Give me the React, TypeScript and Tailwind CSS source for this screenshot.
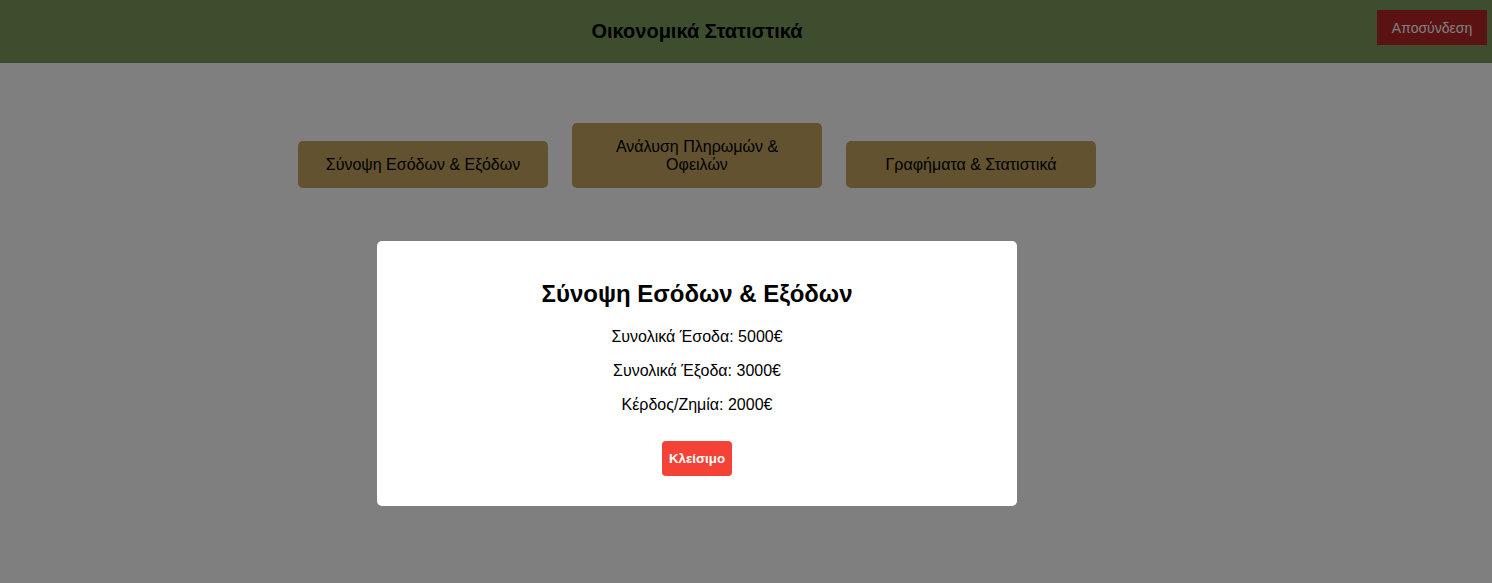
import React from "react";

export default function App() {
  const font = { fontFamily: '"Liberation Sans", Arial, sans-serif' };
  return (
    <div className="min-h-[583px] bg-white text-black relative" style={font}>
      <header className="h-[63px] bg-[#7a9a5c] flex items-start">
        <div className="flex-1 h-[63px] pl-[17px] flex items-center justify-center">
          <h1 className="text-[20px] leading-[23px] font-bold text-black">Οικονομικά Στατιστικά</h1>
        </div>
        <button className="mt-[10px] mr-[5px] w-[110px] h-[35px] shrink-0 bg-[#b42424] text-white text-[14px] leading-[16px]">Αποσύνδεση</button>
      </header>
      <main className="w-[1394px] flex justify-center items-end gap-[24px] pt-[60px]">
        <button className="w-[250px] py-[14.5px] bg-[#c4a45e] rounded-[5px] text-[16px] leading-[18px] text-black">Σύνοψη Εσόδων &amp; Εξόδων</button>
        <button className="w-[250px] py-[14.5px] px-[20px] bg-[#c4a45e] rounded-[5px] text-[16px] leading-[18px] text-black">Ανάλυση Πληρωμών &amp; Οφειλών</button>
        <button className="w-[250px] py-[14.5px] bg-[#c4a45e] rounded-[5px] text-[16px] leading-[18px] text-black">Γραφήματα &amp; Στατιστικά</button>
      </main>
      <div className="fixed inset-0 bg-[rgba(0,0,0,0.5)]">
        <div className="w-[1394px] flex justify-center pt-[241px]">
          <div className="w-[640px] bg-white rounded-[5px] px-5 pt-5 pb-[30px] flex flex-col items-center">
            <h2 className="mt-[19px] mb-[20px] text-[24px] leading-[28px] font-bold">Σύνοψη Εσόδων &amp; Εξόδων</h2>
            <p className="text-[16px] leading-[18px]">Συνολικά Έσοδα: 5000€</p>
            <p className="mt-4 text-[16px] leading-[18px]">Συνολικά Έξοδα: 3000€</p>
            <p className="mt-4 text-[16px] leading-[18px]">Κέρδος/Ζημία: 2000€</p>
            <button className="mt-[27px] w-[70px] h-[35px] bg-[#f44336] text-white text-[13.33px] font-bold rounded-[4px]">Κλείσιμο</button>
          </div>
        </div>
      </div>
    </div>
  );
}
